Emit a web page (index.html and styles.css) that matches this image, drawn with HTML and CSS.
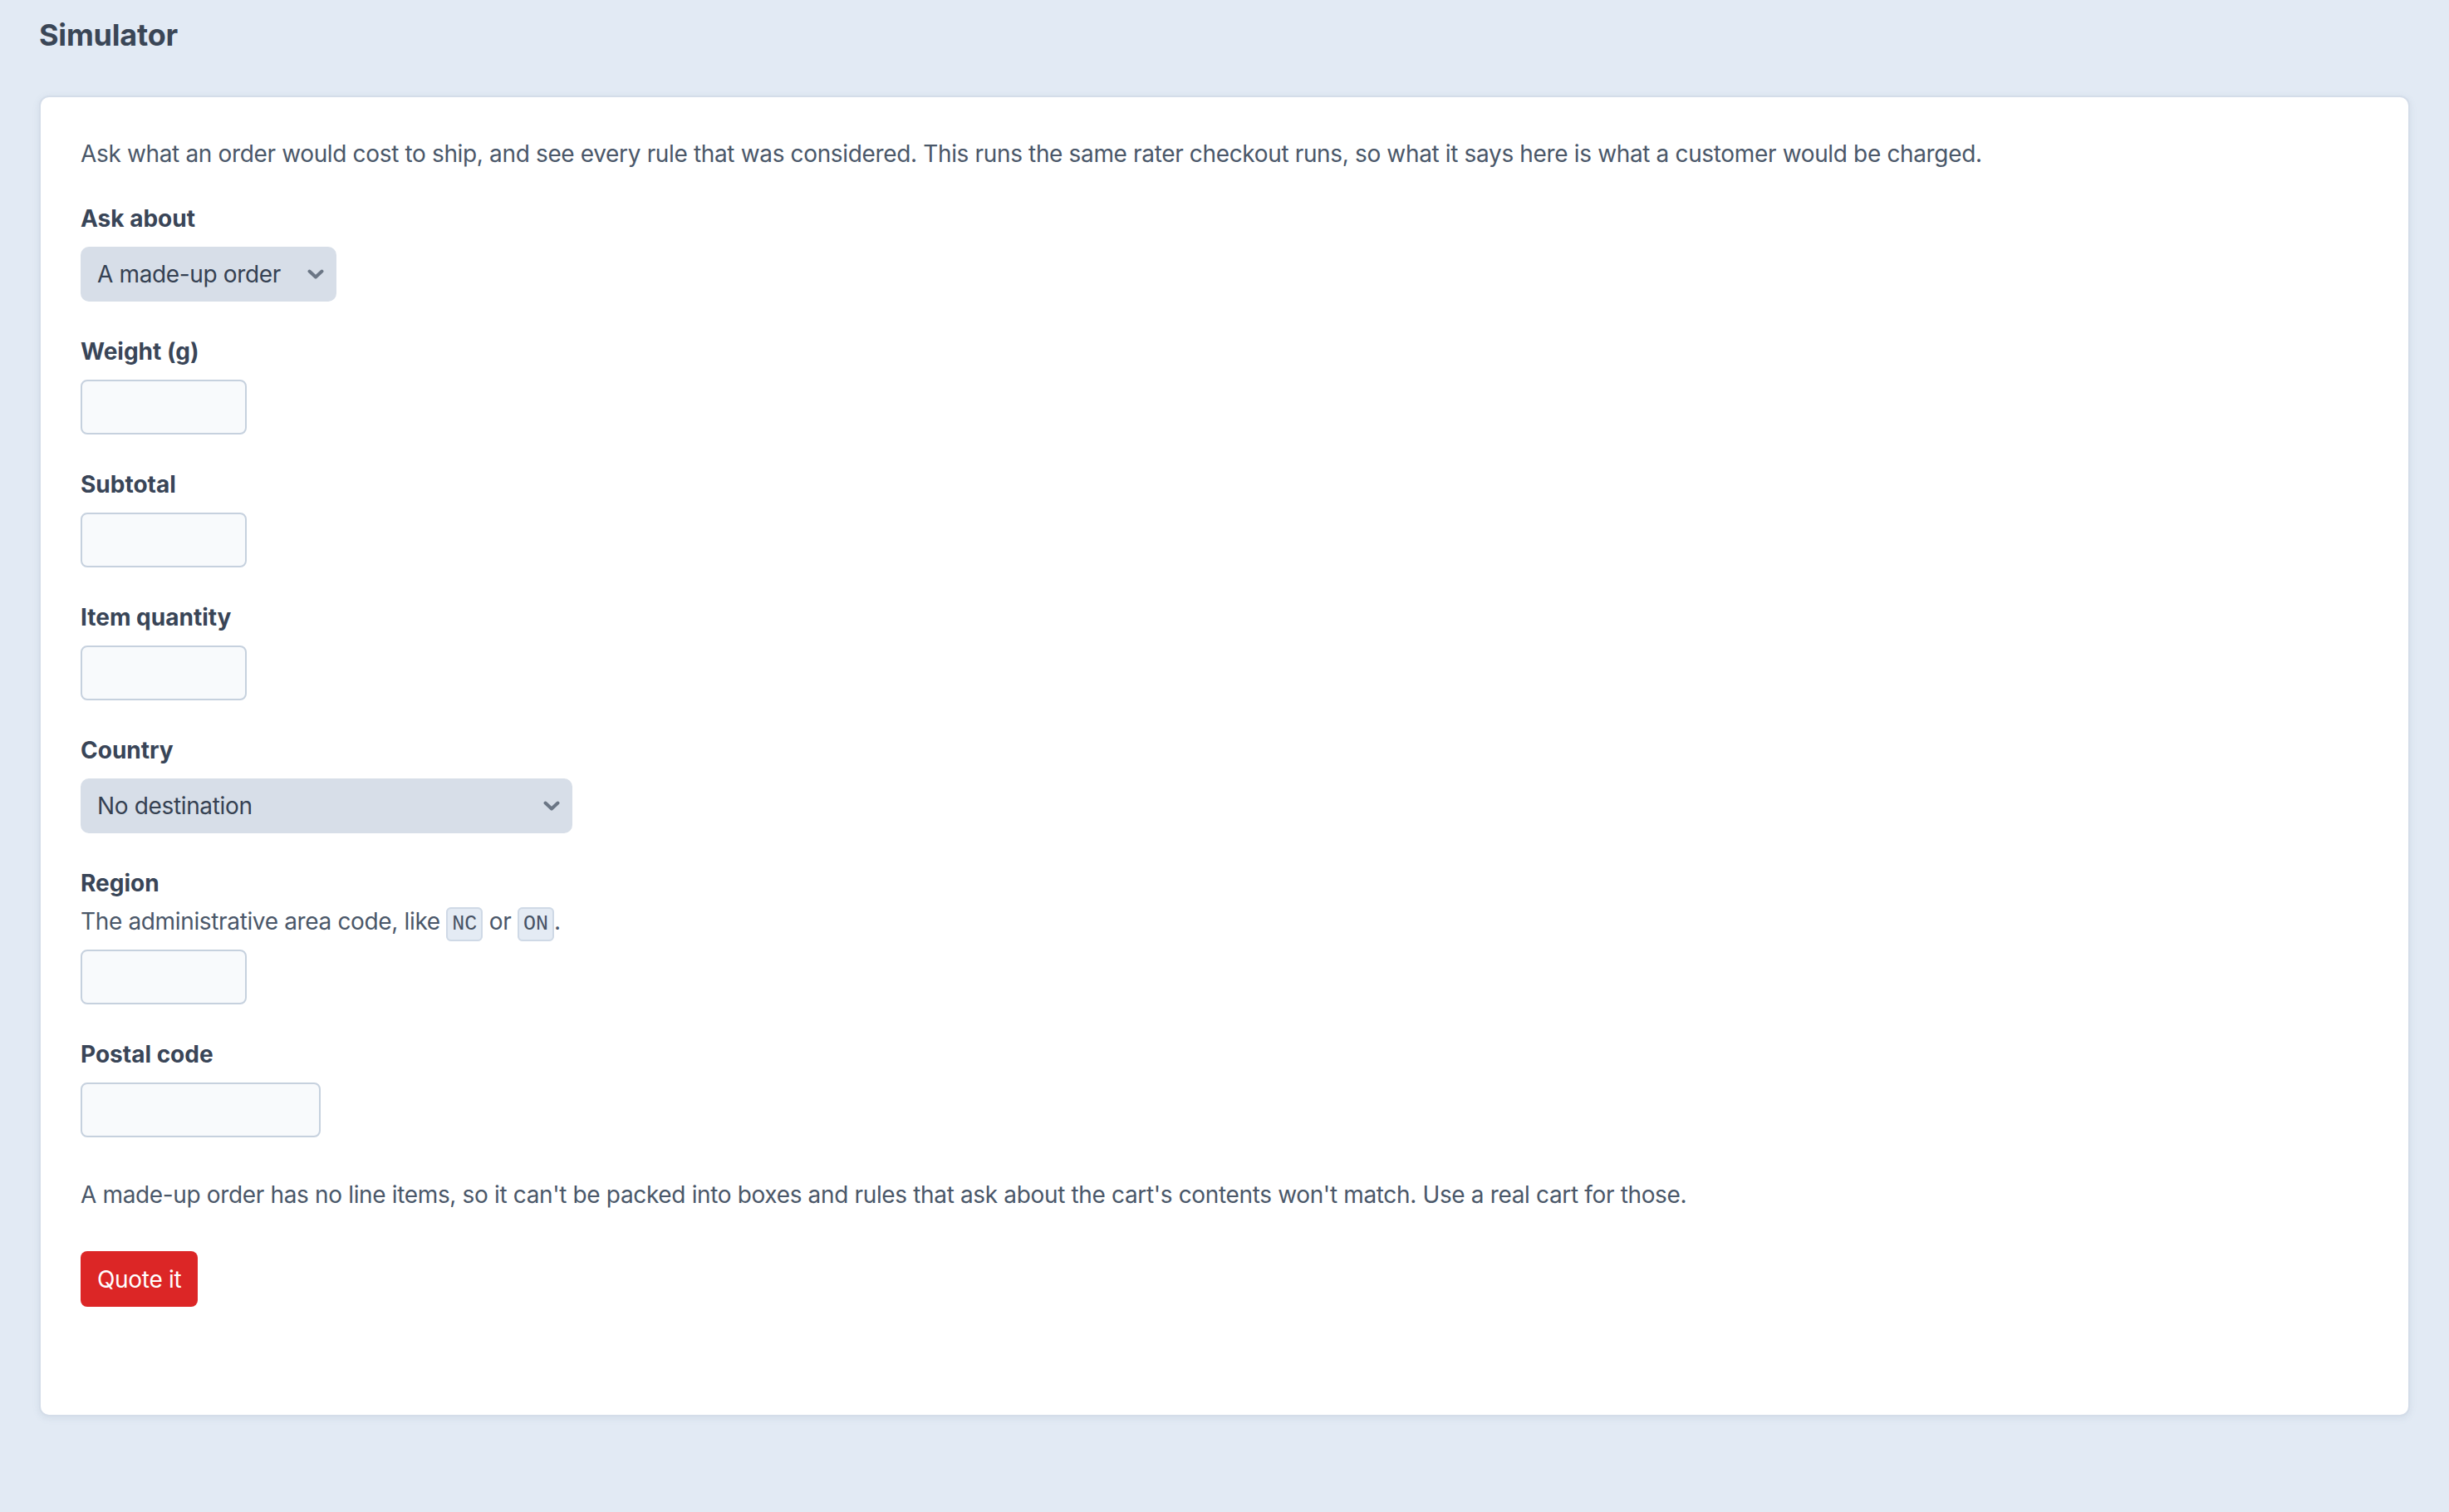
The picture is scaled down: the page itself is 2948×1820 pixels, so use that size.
FILE: index.html
```html
<!DOCTYPE html>
<html lang="en">
<head>
    <meta charset="UTF-8">
    <meta name="viewport" content="width=device-width, initial-scale=1.0">
    <title>Simulator</title>
    <link rel="stylesheet" href="styles.css">
</head>
<body>
    <h1 class="page-title">Simulator</h1>

    <div class="card">
        <p class="intro">Ask what an order would cost to ship, and see every rule that was considered. This runs the same rater checkout runs, so what it says here is what a customer would be charged.</p>

        <form class="sim-form">
            <div class="field">
                <label class="field-label" for="subject">Ask about</label>
                <div class="select-wrap">
                    <select id="subject" class="select">
                        <option>A made-up order</option>
                        <option>A real cart</option>
                    </select>
                    <svg class="chevron" viewBox="0 0 20 12"><path d="M2.5 2.5l7.5 7 7.5-7"/></svg>
                </div>
            </div>

            <div class="field">
                <label class="field-label" for="weight">Weight (g)</label>
                <input type="text" id="weight" class="text-input">
            </div>

            <div class="field">
                <label class="field-label" for="subtotal">Subtotal</label>
                <input type="text" id="subtotal" class="text-input">
            </div>

            <div class="field">
                <label class="field-label" for="quantity">Item quantity</label>
                <input type="text" id="quantity" class="text-input">
            </div>

            <div class="field">
                <label class="field-label" for="country">Country</label>
                <div class="select-wrap wide">
                    <select id="country" class="select">
                        <option>No destination</option>
                    </select>
                    <svg class="chevron" viewBox="0 0 20 12"><path d="M2.5 2.5l7.5 7 7.5-7"/></svg>
                </div>
            </div>

            <div class="field">
                <label class="field-label tight" for="region">Region</label>
                <p class="field-help">The administrative area code, like <code class="code">NC</code> or <code class="code">ON</code>.</p>
                <input type="text" id="region" class="text-input">
            </div>

            <div class="field">
                <label class="field-label" for="postal">Postal code</label>
                <input type="text" id="postal" class="text-input wide">
            </div>

            <p class="note">A made-up order has no line items, so it can't be packed into boxes and rules that ask about the cart's contents won't match. Use a real cart for those.</p>

            <button type="submit" class="btn-primary">Quote it</button>
        </form>
    </div>
</body>
</html>
```

FILE: styles.css
```css
body {
    margin: 0;
    padding: 18px 47px 48px;
    background-color: #e2eaf4;
    font-family: Inter, "Noto Sans", sans-serif;
    color: #394557;
}
.page-title {
    margin: 0 0 49px;
    font-size: 36px;
    line-height: 48px;
    font-weight: 700;
    letter-spacing: -0.2px;
    color: #3a4656;
}
.card {
    background-color: #fff;
    border: 2px solid #d4dde9;
    border-radius: 12px;
    padding: 48px 48px 130px;
    box-shadow: 0 2px 8px rgba(100, 120, 150, 0.12);
}
.intro,
.field-help,
.note {
    font-size: 28px;
    line-height: 40px;
    letter-spacing: -0.35px;
    color: #4a5769;
}
.intro {
    margin: 0 0 38px;
}
.field {
    margin-bottom: 40px;
}
.field-label {
    display: block;
    margin-bottom: 14px;
    font-size: 28px;
    line-height: 40px;
    font-weight: 700;
}
.field-label.tight {
    margin-bottom: 6px;
}
.field-help {
    margin: 0 0 14px;
}
.code {
    font-family: "Liberation Mono", "DejaVu Sans Mono", monospace;
    font-size: 25px;
    line-height: 1;
    letter-spacing: 0;
    padding: 4px 5px;
    background-color: #e4ebf4;
    border: 2px solid #cfd9e6;
    border-radius: 6px;
    color: #465264;
}
.text-input {
    display: block;
    box-sizing: border-box;
    width: 200px;
    height: 66px;
    padding: 0 16px;
    border: 2px solid #c6d1de;
    border-radius: 8px;
    background-color: #f8fafc;
    font-family: inherit;
    font-size: 28px;
    color: #354152;
}
.text-input.wide {
    width: 289px;
}
.select-wrap {
    position: relative;
    width: 308px;
}
.select-wrap.wide {
    width: 592px;
}
.select {
    display: block;
    box-sizing: border-box;
    width: 100%;
    height: 66px;
    padding: 0 56px 0 20px;
    border: 0;
    border-radius: 10px;
    background-color: #d7dee8;
    font-family: inherit;
    font-size: 28px;
    letter-spacing: -0.35px;
    color: #354152;
    appearance: none;
    -webkit-appearance: none;
}
/* arrow drawn over the native select */
.chevron {
    position: absolute;
    right: 15px;
    top: 50%;
    width: 20px;
    height: 12px;
    margin-top: -6px;
    pointer-events: none;
    fill: none;
    stroke: #6b7685;
    stroke-width: 4;
    stroke-linecap: round;
    stroke-linejoin: round;
}
/* top margin collapses into the last field's 40px */
.note {
    margin: 49px 0 48px;
}
.btn-primary {
    display: block;
    height: 67px;
    padding: 0 20px;
    border: 0;
    border-radius: 8px;
    background-color: #dc2626;
    font-family: inherit;
    font-size: 28px;
    letter-spacing: -0.3px;
    color: #fff;
}
```
